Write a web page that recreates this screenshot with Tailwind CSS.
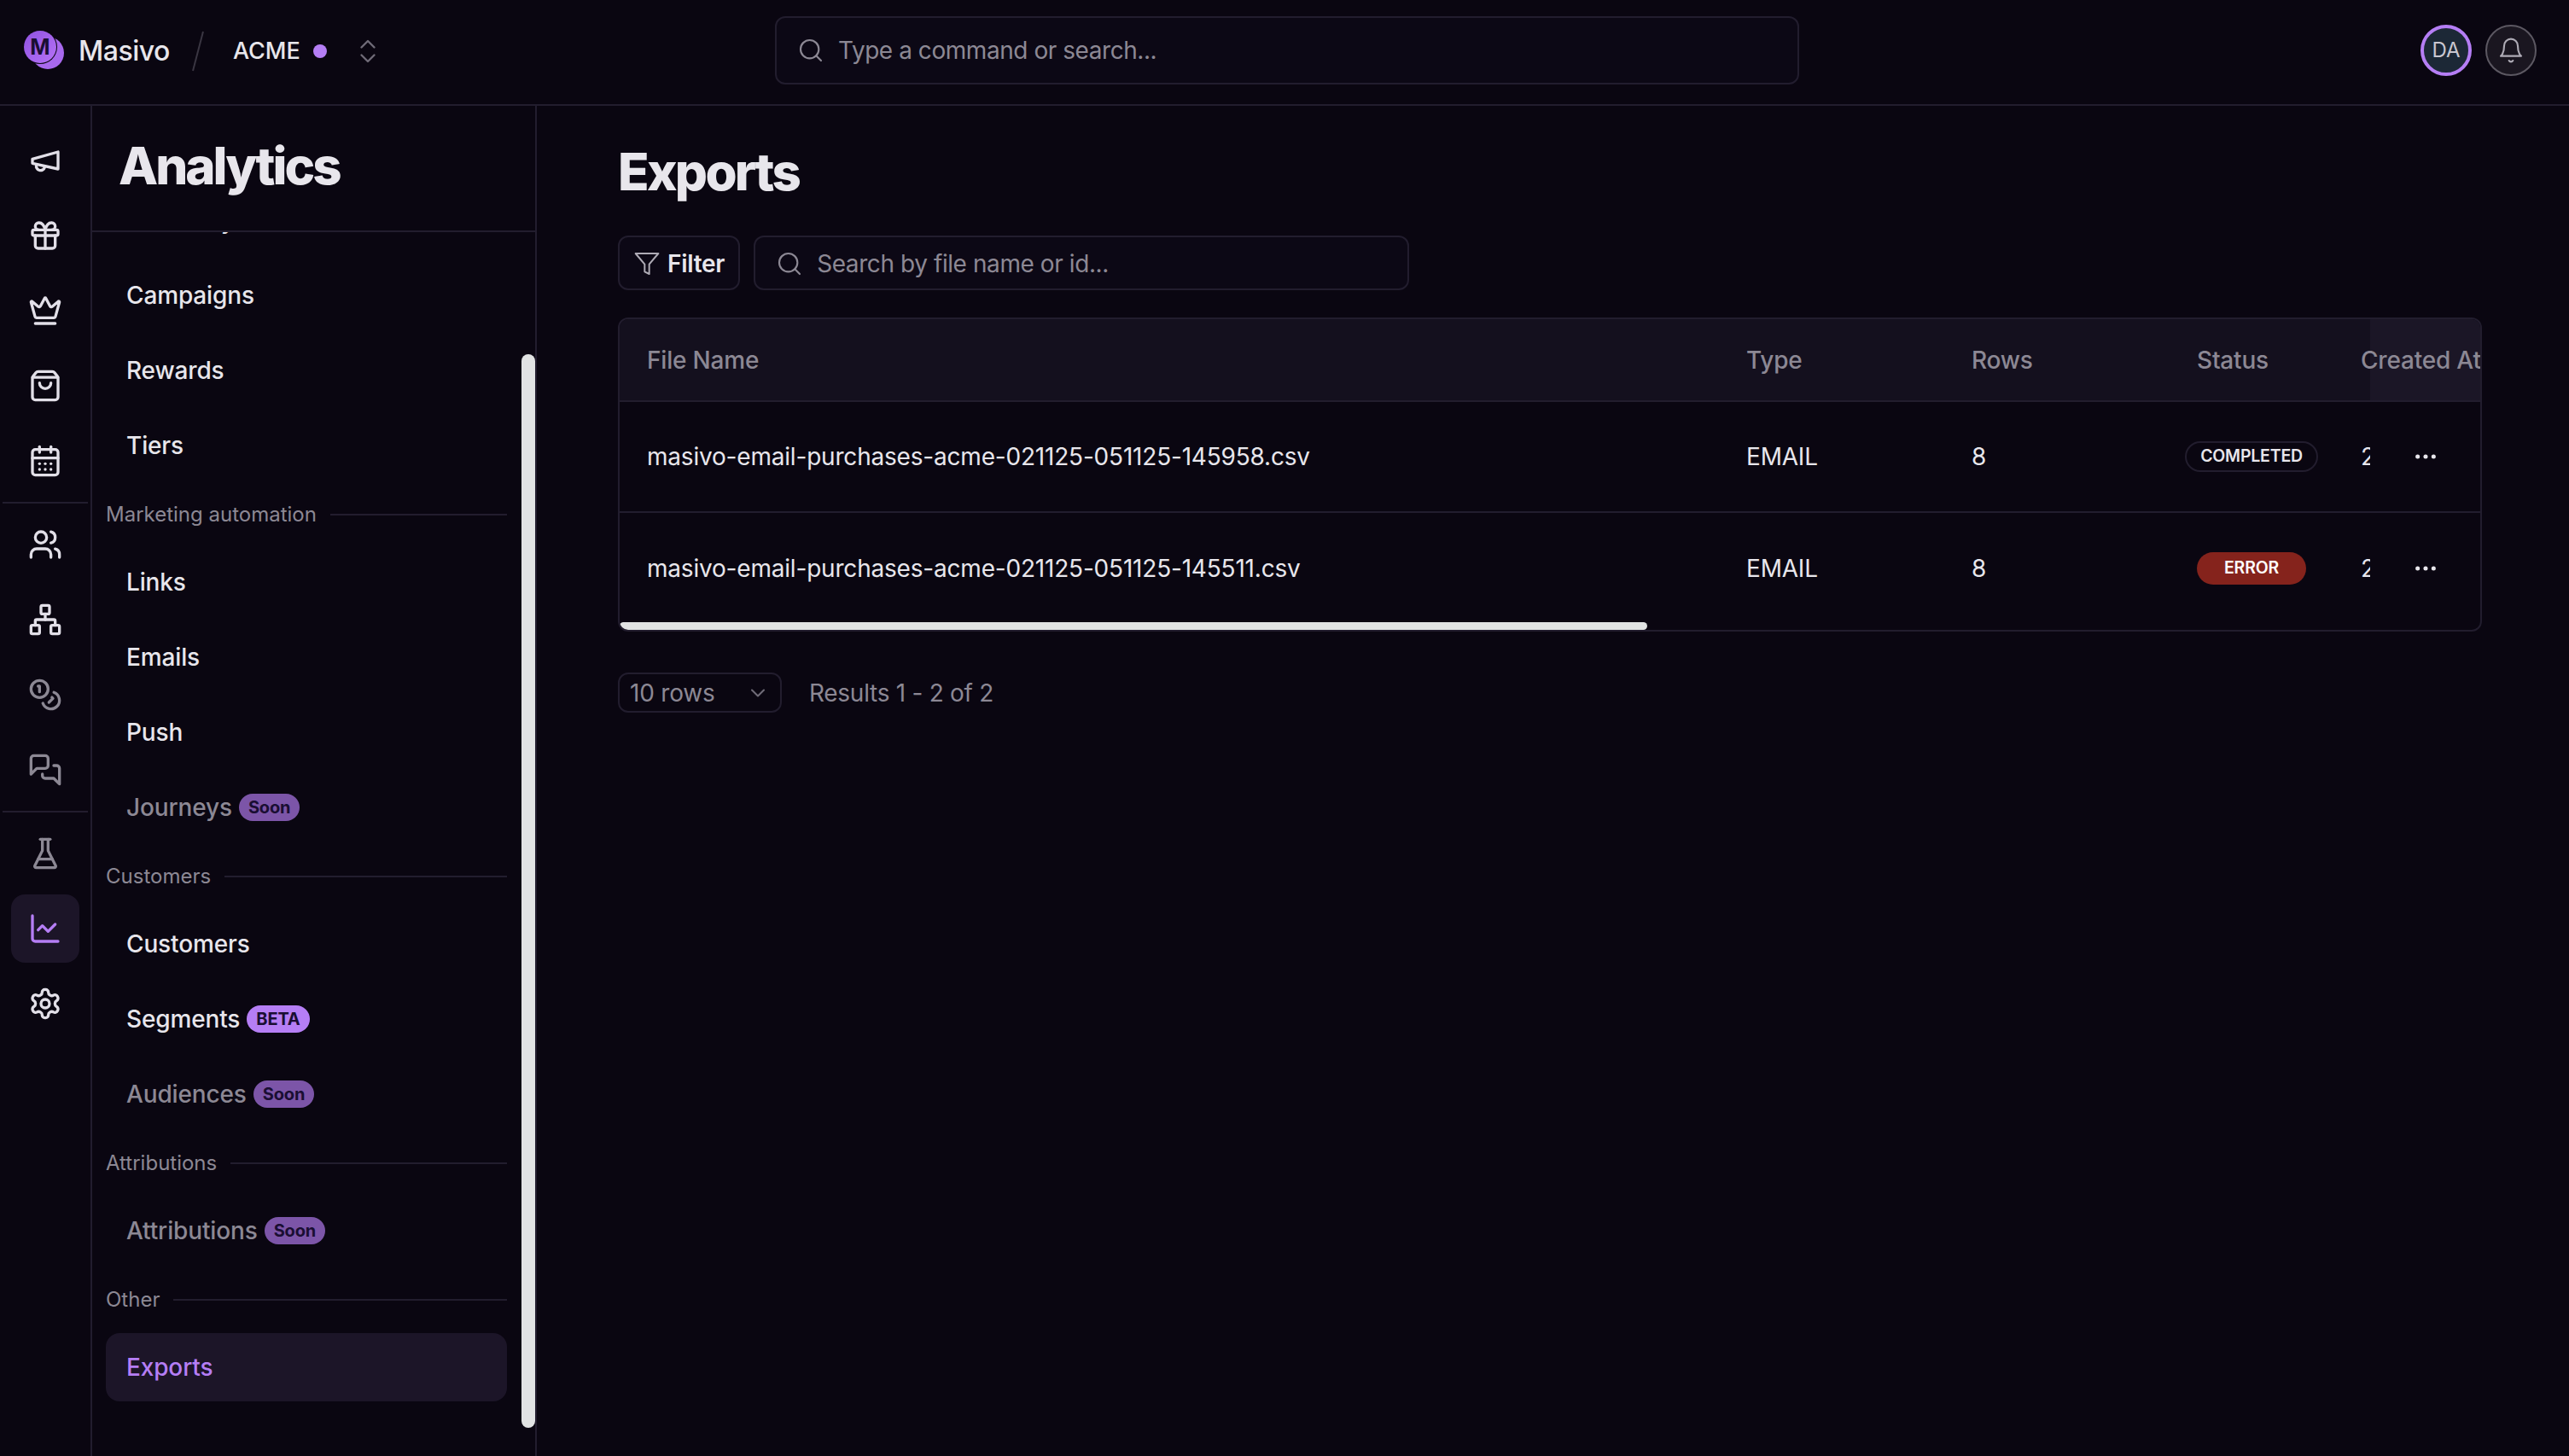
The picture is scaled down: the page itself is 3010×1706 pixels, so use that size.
<!DOCTYPE html>
<html lang="en">
<head>
    <meta charset="UTF-8">
    <title>Exports</title>
    <script src="https://cdn.jsdelivr.net/npm/@tailwindcss/browser@4"></script>
</head>
<body class="bg-[#0a0611] font-['Inter',sans-serif] text-[#e8e6ec]">
<div class="flex flex-col w-[3010px] h-[1706px] overflow-hidden">

    <!-- Top bar -->
    <header class="relative flex items-center h-[124px] shrink-0 border-b-2 border-[#221d2e]">
        <div class="flex items-center pl-[28px] w-[908px] shrink-0 pb-[3px]">
            <svg class="w-[48px] h-[48px] shrink-0" viewBox="0 0 48 48">
                <defs>
                    <linearGradient id="logoFill" x1="0" y1="0" x2="1" y2="1">
                        <stop offset="0" stop-color="#8f52e0"/>
                        <stop offset="1" stop-color="#b672f7"/>
                    </linearGradient>
                </defs>
                <circle cx="28" cy="26" r="19" fill="#a869ee"/>
                <circle cx="19" cy="19" r="20" fill="#0a0611"/>
                <circle cx="19" cy="19" r="19" fill="url(#logoFill)"/>
                <text x="19" y="28" text-anchor="middle" font-size="25" font-weight="700" fill="#1a0e33" font-family="Inter">M</text>
            </svg>
            <span class="ml-[16px] text-[32px] font-medium leading-none tracking-[-0.015em]">Masivo</span>
            <svg class="ml-[26px] w-[14px] h-[48px]" viewBox="0 0 14 48"><path d="M13 1 1 47" stroke="#3a3642" stroke-width="2"/></svg>
            <span class="ml-[34px] text-[27px] font-medium leading-none">ACME</span>
            <span class="ml-[15px] w-[16px] h-[16px] rounded-full bg-[#b57ef5]"></span>
            <svg class="ml-[30px] w-[36px] h-[36px] text-[#6f6b77]" viewBox="0 0 24 24" fill="none" stroke="currentColor" stroke-width="1.6" stroke-linecap="round" stroke-linejoin="round"><path d="m7 15 5 5 5-5"/><path d="m7 9 5-5 5 5"/></svg>
        </div>
        <div class="flex items-center w-[1200px] h-[80px] -mt-[4px] pl-[24px] gap-[16px] rounded-[12px] border-2 border-[#221d2e] bg-[#0c0815]">
            <svg class="w-[32px] h-[32px] text-[#8c8894]" viewBox="0 0 24 24" fill="none" stroke="currentColor" stroke-width="1.6" stroke-linecap="round" stroke-linejoin="round"><circle cx="11" cy="11" r="8"/><path d="m21 21-4.3-4.3"/></svg>
            <span class="text-[28px] text-[#8c8894] tracking-[-0.016em]">Type a command or search...</span>
        </div>
        <div class="ml-auto flex items-center gap-[16px] pr-[38px] -mt-[4px]">
            <div class="flex items-center justify-center w-[60px] h-[60px] rounded-full border-[4px] border-[#b57ef5] bg-[#1c2836] text-[24px] text-[#c9c7d0]">DA</div>
            <div class="flex items-center justify-center w-[60px] h-[60px] rounded-full border-2 border-[#5c5862] bg-[#1a1620]">
                <svg class="w-[32px] h-[32px] text-[#aeabb5]" viewBox="0 0 24 24" fill="none" stroke="currentColor" stroke-width="1.6" stroke-linecap="round" stroke-linejoin="round"><path d="M6 8a6 6 0 0 1 12 0c0 7 3 9 3 9H3s3-2 3-9"/><path d="M10.3 21a1.94 1.94 0 0 0 3.4 0"/></svg>
            </div>
        </div>
    </header>

    <div class="flex flex-1 min-h-0">
        <!-- Icon rail -->
        <nav class="flex flex-col items-center w-[108px] shrink-0 pt-[24px] pr-[1px] border-r-2 border-[#221d2e] gap-[8px]">
            <a class="flex items-center justify-center w-[80px] h-[80px] text-[#e2dfe8]">
                <svg class="w-[40px] h-[40px]" viewBox="0 0 24 24" fill="none" stroke="currentColor" stroke-width="2" stroke-linecap="round" stroke-linejoin="round"><path d="m3 11 18-5v12L3 14v-3z"/><path d="M11.6 16.8a3 3 0 1 1-5.8-1.6"/></svg>
            </a>
            <a class="flex items-center justify-center w-[80px] h-[80px] text-[#e2dfe8]">
                <svg class="w-[40px] h-[40px]" viewBox="0 0 24 24" fill="none" stroke="currentColor" stroke-width="2" stroke-linecap="round" stroke-linejoin="round"><rect x="3" y="8" width="18" height="4" rx="1"/><path d="M12 8v13"/><path d="M19 12v7a2 2 0 0 1-2 2H7a2 2 0 0 1-2-2v-7"/><path d="M7.5 8a2.5 2.5 0 0 1 0-5A4.8 8 0 0 1 12 8a4.8 8 0 0 1 4.5-5 2.5 2.5 0 0 1 0 5"/></svg>
            </a>
            <a class="flex items-center justify-center w-[80px] h-[80px] text-[#e2dfe8]">
                <svg class="w-[40px] h-[40px]" viewBox="0 0 24 24" fill="none" stroke="currentColor" stroke-width="2" stroke-linecap="round" stroke-linejoin="round"><path d="M11.562 3.266a.5.5 0 0 1 .876 0L15.39 8.87a1 1 0 0 0 1.516.294L21.183 5.5a.5.5 0 0 1 .798.519l-2.834 10.246a1 1 0 0 1-.956.734H5.81a1 1 0 0 1-.957-.734L2.02 6.02a.5.5 0 0 1 .798-.519l4.276 3.664a1 1 0 0 0 1.516-.294z"/><path d="M5 21h14"/></svg>
            </a>
            <a class="flex items-center justify-center w-[80px] h-[80px] text-[#e2dfe8]">
                <svg class="w-[40px] h-[40px]" viewBox="0 0 24 24" fill="none" stroke="currentColor" stroke-width="2" stroke-linecap="round" stroke-linejoin="round"><path d="M16 10a4 4 0 0 1-8 0"/><path d="M3.103 6.034h17.794"/><path d="M3.4 5.467a2 2 0 0 0-.4 1.2V20a2 2 0 0 0 2 2h14a2 2 0 0 0 2-2V6.667a2 2 0 0 0-.4-1.2l-2-2.667A2 2 0 0 0 17 2H7a2 2 0 0 0-1.6.8z"/></svg>
            </a>
            <a class="flex items-center justify-center w-[80px] h-[80px] text-[#e2dfe8]">
                <svg class="w-[40px] h-[40px]" viewBox="0 0 24 24" fill="none" stroke="currentColor" stroke-width="2" stroke-linecap="round" stroke-linejoin="round"><path d="M8 2v4"/><path d="M16 2v4"/><rect x="3" y="4" width="18" height="18" rx="2"/><path d="M3 10h18"/><path d="M8 14h.01"/><path d="M12 14h.01"/><path d="M16 14h.01"/><path d="M8 18h.01"/><path d="M12 18h.01"/><path d="M16 18h.01"/></svg>
            </a>
            <div class="w-[100px] h-[2px] bg-[#221d2e]"></div>
            <a class="flex items-center justify-center w-[80px] h-[80px] text-[#e2dfe8]">
                <svg class="w-[40px] h-[40px]" viewBox="0 0 24 24" fill="none" stroke="currentColor" stroke-width="2" stroke-linecap="round" stroke-linejoin="round"><path d="M16 21v-2a4 4 0 0 0-4-4H6a4 4 0 0 0-4 4v2"/><circle cx="9" cy="7" r="4"/><path d="M22 21v-2a4 4 0 0 0-3-3.87"/><path d="M16 3.13a4 4 0 0 1 0 7.75"/></svg>
            </a>
            <a class="flex items-center justify-center w-[80px] h-[80px] text-[#e2dfe8]">
                <svg class="w-[40px] h-[40px]" viewBox="0 0 24 24" fill="none" stroke="currentColor" stroke-width="2" stroke-linecap="round" stroke-linejoin="round"><rect x="16" y="16" width="6" height="6" rx="1"/><rect x="2" y="16" width="6" height="6" rx="1"/><rect x="9" y="2" width="6" height="6" rx="1"/><path d="M5 16v-3a1 1 0 0 1 1-1h12a1 1 0 0 1 1 1v3"/><path d="M12 12V8"/></svg>
            </a>
            <a class="flex items-center justify-center w-[80px] h-[80px] text-[#8c8894]">
                <svg class="w-[40px] h-[40px]" viewBox="0 0 24 24" fill="none" stroke="currentColor" stroke-width="2" stroke-linecap="round" stroke-linejoin="round"><circle cx="8" cy="8" r="6"/><path d="M18.09 10.37A6 6 0 1 1 10.34 18"/><path d="M7 6h1v4"/><path d="m16.71 13.88.7.71-2.82 2.82"/></svg>
            </a>
            <a class="flex items-center justify-center w-[80px] h-[80px] text-[#8c8894]">
                <svg class="w-[40px] h-[40px]" viewBox="0 0 24 24" fill="none" stroke="currentColor" stroke-width="2" stroke-linecap="round" stroke-linejoin="round"><path d="M14 9a2 2 0 0 1-2 2H6l-4 4V4a2 2 0 0 1 2-2h8a2 2 0 0 1 2 2z"/><path d="M18 9h2a2 2 0 0 1 2 2v11l-4-4h-6a2 2 0 0 1-2-2v-1"/></svg>
            </a>
            <div class="w-[100px] h-[2px] bg-[#221d2e]"></div>
            <a class="flex items-center justify-center w-[80px] h-[80px] text-[#8c8894]">
                <svg class="w-[40px] h-[40px]" viewBox="0 0 24 24" fill="none" stroke="currentColor" stroke-width="2" stroke-linecap="round" stroke-linejoin="round"><path d="M10 2v7.527a2 2 0 0 1-.211.896L4.72 20.55a1 1 0 0 0 .9 1.45h12.76a1 1 0 0 0 .9-1.45l-5.069-10.127A2 2 0 0 1 14 9.527V2"/><path d="M8.5 2h7"/><path d="M7 16h10"/></svg>
            </a>
            <a class="flex items-center justify-center w-[80px] h-[80px] rounded-[16px] bg-[#1c1528] text-[#b57ef5]">
                <svg class="w-[40px] h-[40px]" viewBox="0 0 24 24" fill="none" stroke="currentColor" stroke-width="2" stroke-linecap="round" stroke-linejoin="round"><path d="M3 3v16a2 2 0 0 0 2 2h16"/><path d="m19 9-5 5-4-4-3 3"/></svg>
            </a>
            <a class="flex items-center justify-center w-[80px] h-[80px] text-[#e2dfe8]">
                <svg class="w-[40px] h-[40px]" viewBox="0 0 24 24" fill="none" stroke="currentColor" stroke-width="2" stroke-linecap="round" stroke-linejoin="round"><path d="M12.22 2h-.44a2 2 0 0 0-2 2v.18a2 2 0 0 1-1 1.73l-.43.25a2 2 0 0 1-2 0l-.15-.08a2 2 0 0 0-2.73.73l-.22.38a2 2 0 0 0 .73 2.73l.15.1a2 2 0 0 1 1 1.72v.51a2 2 0 0 1-1 1.74l-.15.09a2 2 0 0 0-.73 2.73l.22.38a2 2 0 0 0 2.73.73l.15-.08a2 2 0 0 1 2 0l.43.25a2 2 0 0 1 1 1.73V20a2 2 0 0 0 2 2h.44a2 2 0 0 0 2-2v-.18a2 2 0 0 1 1-1.73l.43-.25a2 2 0 0 1 2 0l.15.08a2 2 0 0 0 2.73-.73l.22-.39a2 2 0 0 0-.73-2.73l-.15-.08a2 2 0 0 1-1-1.74v-.5a2 2 0 0 1 1-1.74l.15-.09a2 2 0 0 0 .73-2.73l-.22-.38a2 2 0 0 0-2.73-.73l-.15.08a2 2 0 0 1-2 0l-.43-.25a2 2 0 0 1-1-1.73V4a2 2 0 0 0-2-2z"/><circle cx="12" cy="12" r="3"/></svg>
            </a>
        </nav>

        <!-- Section sidebar -->
        <aside class="relative flex flex-col w-[521px] shrink-0 border-r-2 border-[#221d2e]">
            <div class="flex items-center h-[148px] shrink-0 pl-[31px] pb-[6px] border-b-2 border-[#221d2e]">
                <h2 class="text-[60px] font-extrabold tracking-[-0.05em] leading-none">Analytics</h2>
            </div>
            <div class="flex-1 min-h-0 overflow-hidden pl-[16px] pr-[33px]">
                <div class="-mt-[54px] flex flex-col gap-[8px] text-[28px] font-medium tracking-[-0.005em]">
                    <a class="flex items-center h-[80px] px-[24px]">Summary</a>
                    <a class="flex items-center h-[80px] px-[24px]">Campaigns</a>
                    <a class="flex items-center h-[80px] px-[24px]">Rewards</a>
                    <a class="flex items-center h-[80px] px-[24px]">Tiers</a>
                </div>
                <div class="flex items-center gap-[16px] h-[40px] my-[20px] pt-[1px] text-[24px] text-[#8c8894]">Marketing automation<span class="flex-1 h-[2px] bg-[#221d2e]"></span></div>
                <div class="flex flex-col gap-[8px] text-[28px] font-medium tracking-[-0.005em]">
                    <a class="flex items-center h-[80px] px-[24px]">Links</a>
                    <a class="flex items-center h-[80px] px-[24px]">Emails</a>
                    <a class="flex items-center h-[80px] px-[24px]">Push</a>
                    <a class="flex items-center gap-[8px] h-[80px] px-[24px] text-[#8c8894]">Journeys<span class="flex items-center h-[32px] px-[11px] rounded-full bg-[#7c55a8] text-[20px] font-bold text-[#1a0e33]">Soon</span></a>
                </div>
                <div class="flex items-center gap-[16px] h-[40px] my-[20px] pt-[1px] text-[24px] text-[#8c8894]">Customers<span class="flex-1 h-[2px] bg-[#221d2e]"></span></div>
                <div class="flex flex-col gap-[8px] text-[28px] font-medium tracking-[-0.005em]">
                    <a class="flex items-center h-[80px] px-[24px]">Customers</a>
                    <a class="flex items-center gap-[8px] h-[80px] px-[24px]">Segments<span class="flex items-center h-[32px] px-[11px] rounded-full bg-[#b57ef5] text-[20px] font-bold text-[#1a0e33]">BETA</span></a>
                    <a class="flex items-center gap-[8px] h-[80px] px-[24px] text-[#8c8894]">Audiences<span class="flex items-center h-[32px] px-[11px] rounded-full bg-[#7c55a8] text-[20px] font-bold text-[#1a0e33]">Soon</span></a>
                </div>
                <div class="flex items-center gap-[16px] h-[40px] my-[20px] pt-[1px] text-[24px] text-[#8c8894]">Attributions<span class="flex-1 h-[2px] bg-[#221d2e]"></span></div>
                <div class="flex flex-col gap-[8px] text-[28px] font-medium tracking-[-0.005em]">
                    <a class="flex items-center gap-[8px] h-[80px] px-[24px] text-[#8c8894]">Attributions<span class="flex items-center h-[32px] px-[11px] rounded-full bg-[#7c55a8] text-[20px] font-bold text-[#1a0e33]">Soon</span></a>
                </div>
                <div class="flex items-center gap-[16px] h-[40px] my-[20px] pt-[1px] text-[24px] text-[#8c8894]">Other<span class="flex-1 h-[2px] bg-[#221d2e]"></span></div>
                <div class="flex flex-col gap-[8px] text-[28px] font-medium tracking-[-0.005em]">
                    <a class="flex items-center h-[80px] px-[24px] rounded-[16px] bg-[#1c1528] text-[#b57ef5]">Exports</a>
                </div>
            </div>
            <!-- scrollbar -->
            <div class="absolute right-0 top-[291px] w-[16px] h-[1258px] rounded-full bg-[#e1e3e3]"></div>
        </aside>

        <!-- Main -->
        <main class="flex-1 min-w-0 pl-[95px] pr-[102px]">
            <h1 class="mt-[45px] h-[64px] flex items-center text-[60px] font-extrabold tracking-[-0.045em] leading-none">Exports</h1>
            <div class="flex gap-[16px] mt-[43px]">
                <button class="flex items-center gap-[8px] h-[64px] pl-[16px] pr-[16px] pt-[2px] rounded-[12px] border-2 border-[#221d2e] bg-[#0c0815] text-[28px] font-semibold tracking-[-0.01em]">
                    <svg class="w-[32px] h-[32px] text-[#aeabb5]" viewBox="0 0 24 24" fill="none" stroke="currentColor" stroke-width="1.5" stroke-linecap="round" stroke-linejoin="round"><path d="M22 3H2l8 9.46V19l4 2v-8.54L22 3z"/></svg>
                    Filter
                </button>
                <div class="flex items-center gap-[16px] w-[768px] h-[64px] pl-[24px] pt-[2px] rounded-[12px] border-2 border-[#221d2e] bg-[#0c0815]">
                    <svg class="w-[32px] h-[32px] text-[#8c8894]" viewBox="0 0 24 24" fill="none" stroke="currentColor" stroke-width="1.6" stroke-linecap="round" stroke-linejoin="round"><circle cx="11" cy="11" r="8"/><path d="m21 21-4.3-4.3"/></svg>
                    <span class="text-[28px] text-[#8c8894] tracking-[-0.015em]">Search by file name or id...</span>
                </div>
            </div>

            <!-- Table -->
            <div class="relative mt-[32px] w-[2184px] h-[368px] rounded-[12px] border-2 border-[#221d2e] overflow-hidden text-[28px] tracking-[-0.007em]">
                <div class="flex items-center h-[97px] border-b-2 border-[#221d2e] bg-[#14101e] text-[#8c8894] font-medium">
                    <div class="w-[1288px] pl-[32px] shrink-0">File Name</div>
                    <div class="w-[264px] pl-[32px] shrink-0">Type</div>
                    <div class="w-[264px] pl-[32px] shrink-0">Rows</div>
                    <div class="w-[192px] pl-[32px] shrink-0">Status</div>
                    <div class="relative flex-1 h-full flex items-center pl-[32px] overflow-hidden whitespace-nowrap">
                        <span class="absolute top-0 bottom-0 left-[43px] right-0 bg-[#1b1626]"></span>
                        <span class="relative">Created At</span>
                    </div>
                </div>
                <div class="flex items-center h-[130px] border-b-2 border-[#221d2e]">
                    <div class="w-[1288px] pl-[32px] shrink-0">masivo-email-purchases-acme-021125-051125-145958.csv</div>
                    <div class="w-[264px] pl-[32px] shrink-0">EMAIL</div>
                    <div class="w-[264px] pl-[32px] shrink-0">8</div>
                    <div class="w-[192px] flex justify-center shrink-0"><span class="flex items-center h-[36px] px-[16px] rounded-full border-2 border-[#221d2e] text-[19.5px] font-semibold">COMPLETED</span></div>
                    <div class="w-[43px] pl-[32px] overflow-hidden shrink-0">2</div>
                    <div class="flex-1 flex justify-center">
                        <svg class="w-[32px] h-[32px]" viewBox="0 0 24 24" fill="currentColor"><circle cx="5" cy="12" r="1.9"/><circle cx="12" cy="12" r="1.9"/><circle cx="19" cy="12" r="1.9"/></svg>
                    </div>
                </div>
                <div class="flex items-center h-[130px]">
                    <div class="w-[1288px] pl-[32px] shrink-0">masivo-email-purchases-acme-021125-051125-145511.csv</div>
                    <div class="w-[264px] pl-[32px] shrink-0">EMAIL</div>
                    <div class="w-[264px] pl-[32px] shrink-0">8</div>
                    <div class="w-[192px] flex justify-center shrink-0"><span class="flex items-center h-[38px] px-[32px] rounded-full bg-[#85231c] text-[19.5px] font-semibold text-white">ERROR</span></div>
                    <div class="w-[43px] pl-[32px] overflow-hidden shrink-0">2</div>
                    <div class="flex-1 flex justify-center">
                        <svg class="w-[32px] h-[32px]" viewBox="0 0 24 24" fill="currentColor"><circle cx="5" cy="12" r="1.9"/><circle cx="12" cy="12" r="1.9"/><circle cx="19" cy="12" r="1.9"/></svg>
                    </div>
                </div>
                <!-- horizontal scrollbar -->
                <div class="absolute left-0 bottom-0 w-[1204px] h-[9px] rounded-full bg-[#e1e3e3]"></div>
            </div>

            <div class="flex items-center mt-[48px]">
                <div class="flex items-center justify-between w-[192px] h-[47px] pl-[12px] pr-[12px] rounded-[12px] border-2 border-[#221d2e] text-[28px] text-[#8c8894] tracking-[-0.007em]">
                    10 rows
                    <svg class="w-[28px] h-[28px] text-[#6f6b77]" viewBox="0 0 24 24" fill="none" stroke="currentColor" stroke-width="1.8" stroke-linecap="round" stroke-linejoin="round"><path d="m6 9 6 6 6-6"/></svg>
                </div>
                <span class="ml-[32px] text-[28px] text-[#8c8894] tracking-[-0.01em]">Results 1 - 2 of 2</span>
            </div>
        </main>
    </div>
</div>
</body>
</html>
